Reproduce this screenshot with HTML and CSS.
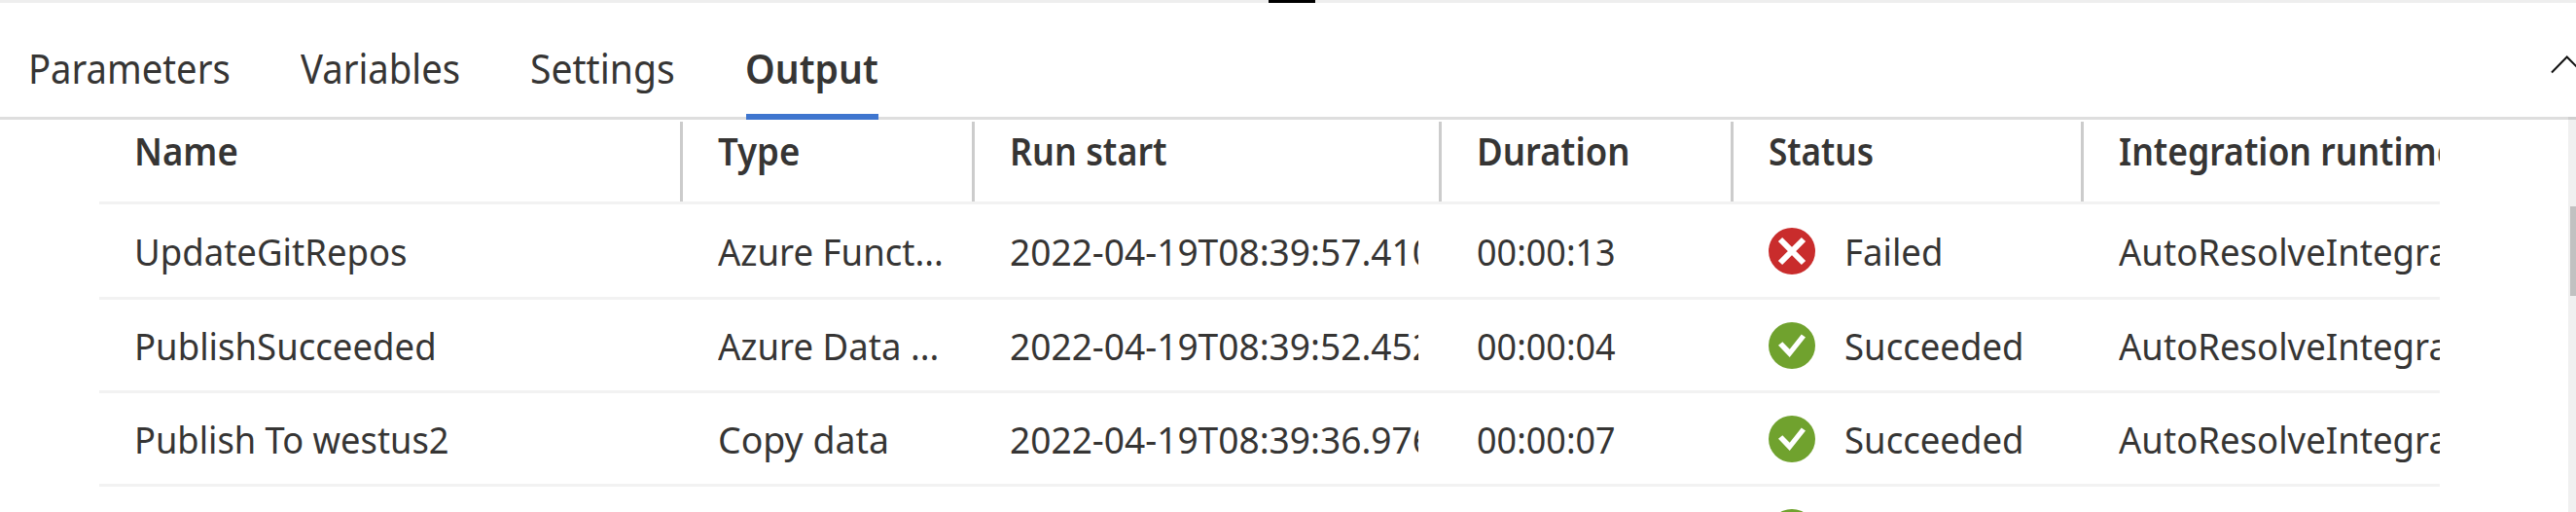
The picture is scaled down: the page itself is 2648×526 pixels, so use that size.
FILE: index.html
```html
<!DOCTYPE html>
<html lang="en">
<head>
<meta charset="utf-8">
<title>Pipeline output</title>
<link rel="stylesheet" href="styles.css">
</head>
<body>
<svg class="defs" width="0" height="0">
  <symbol id="failed" viewBox="0 0 48 48"><circle cx="24" cy="24" r="24" fill="#c92c2c"/><path d="M12 12L36 36M36 12L12 36" stroke="#fff" stroke-width="6"/></symbol>
  <symbol id="ok" viewBox="0 0 48 48"><circle cx="24" cy="24" r="24" fill="#70a22e"/><path d="M10 23.8L14.3 20.3L21.7 27.8L33.8 12.5L38 15.5L21.7 36Z" fill="#fff"/></symbol>
</svg>
<div class="panel">
  <div class="resize-bar"><div class="grip"></div></div>
  <div class="tabs">
    <div class="tab tab-parameters"><span class="t">Parameters</span></div>
    <div class="tab tab-variables"><span class="t">Variables</span></div>
    <div class="tab tab-settings"><span class="t">Settings</span></div>
    <div class="tab tab-output active"><span class="t">Output</span></div>
    <svg class="chevron" width="26" height="22" viewBox="0 0 26 22"><path d="M1 18.5L16.7 2.5L32.7 18.5" fill="none" stroke="#111" stroke-width="2"/></svg>
  </div>
  <div class="content">
    <div class="grid">
      <div class="row head">
        <div class="cell"><span class="t">Name</span></div>
        <div class="cell"><span class="t">Type</span></div>
        <div class="cell"><span class="t t-run">Run start</span></div>
        <div class="cell"><span class="t">Duration</span></div>
        <div class="cell"><span class="t t-status">Status</span></div>
        <div class="cell"><span class="t t-runtime">Integration runtime</span></div>
      </div>
      <div class="row first">
        <div class="cell"><span class="t">UpdateGitRepos</span></div>
        <div class="cell"><span class="t">Azure Funct...</span></div>
        <div class="cell"><span class="t t-time">2022-04-19T08:39:57.410</span></div>
        <div class="cell"><span class="t t-duration">00:00:13</span></div>
        <div class="cell status"><svg class="icon"><use href="#failed"/></svg><span class="t">Failed</span></div>
        <div class="cell"><span class="t">AutoResolveIntegrationRuntime</span></div>
      </div>
      <div class="row">
        <div class="cell"><span class="t">PublishSucceeded</span></div>
        <div class="cell"><span class="t">Azure Data ...</span></div>
        <div class="cell"><span class="t t-time">2022-04-19T08:39:52.452</span></div>
        <div class="cell"><span class="t t-duration">00:00:04</span></div>
        <div class="cell status"><svg class="icon"><use href="#ok"/></svg><span class="t">Succeeded</span></div>
        <div class="cell"><span class="t">AutoResolveIntegrationRuntime</span></div>
      </div>
      <div class="row">
        <div class="cell"><span class="t t-westus">Publish To westus2</span></div>
        <div class="cell"><span class="t t-copy">Copy data</span></div>
        <div class="cell"><span class="t t-time">2022-04-19T08:39:36.976</span></div>
        <div class="cell"><span class="t t-duration">00:00:07</span></div>
        <div class="cell status"><svg class="icon"><use href="#ok"/></svg><span class="t">Succeeded</span></div>
        <div class="cell"><span class="t">AutoResolveIntegrationRuntime</span></div>
      </div>
      <div class="row">
        <div class="cell"></div>
        <div class="cell"></div>
        <div class="cell"></div>
        <div class="cell"></div>
        <div class="cell status"><svg class="icon"><use href="#ok"/></svg></div>
        <div class="cell"></div>
      </div>
    </div>
    <div class="scrollbar"><div class="thumb"></div></div>
  </div>
</div>
</body>
</html>
```
FILE: styles.css
```css
* { box-sizing: border-box; }

body {
  margin: 0;
  background: #fff;
  color: #363534;
  font-family: "Noto Sans", sans-serif;
  font-size: 39px;
  overflow: hidden;
}

.defs { display: block; }

.panel {
  display: flex;
  flex-direction: column;
  width: 2648px;
  height: 526px;
  overflow: hidden;
}

.resize-bar {
  flex: none;
  height: 3px;
  padding-left: 1304px;
  background: #eee;
}

.grip {
  width: 48px;
  height: 3px;
  background: #000;
}

/* Slightly condensed text */
.t {
  --k: 0.937;
  display: inline-block;
  flex: none;
  white-space: nowrap;
  transform: scaleX(var(--k));
  transform-origin: left center;
}

.tabs {
  flex: none;
  display: flex;
  height: 120px;
  padding-left: 29px;
  border-bottom: 3px solid #dedede;
  font-size: 42px;
  line-height: 58px;
}

.tab {
  flex: none;
  height: 120px;
  padding-top: 38px;
}

.tab-parameters { width: 280px; }
.tab-variables { width: 236px; }
.tab-settings { width: 222px; }
.tab-output { width: 136px; }
.tab-parameters .t { --k: 0.91; }
.tab-variables .t { --k: 0.911; }
.tab-settings .t { --k: 0.93; }
.tab-output .t { --k: 0.93; margin-left: -1px; }

.tab.active {
  border-bottom: 6px solid #3f76cf;
  font-weight: 600;
}

.chevron {
  margin: 53px 0 0 auto;
}

.content {
  flex: 1;
  display: flex;
  justify-content: space-between;
  min-height: 0;
}

.grid {
  width: 2406px;
  margin-left: 102px;
}

.row {
  display: grid;
  grid-template-columns: 600px 300px 480px 300px 360px 366px;
  height: 96px;
  border-bottom: 3px solid #f2f2f2;
}

.row.first { height: 98px; }

.cell {
  display: flex;
  align-items: center;
  min-width: 0;
  margin-right: 24px;
  padding-left: 36px;
  line-height: 53px;
  overflow: hidden;
}

.cell:last-child { margin-right: 0; }

.head {
  height: 87px;
  padding-top: 2px;
  font-weight: 600;
}

.head .cell {
  align-items: flex-start;
  margin-right: 0;
  padding-top: 3px;
  border-right: 3px solid #ccc;
}

.head .cell:last-child { border-right: 0; }

.status .icon {
  flex: none;
  width: 48px;
  height: 48px;
  margin-right: 30px;
}

.t-run { --k: 0.92; }
.t-status { --k: 0.9; }
.t-runtime { --k: 0.912; }
.t-time { --k: 0.951; }
.t-duration { --k: 0.922; }
.t-westus { --k: 0.93; }
.t-copy { --k: 0.96; }

.scrollbar {
  width: 8px;
  margin-top: -3px;
  padding: 92px 0 0 2px;
  background: rgba(0, 0, 0, 0.06);
}

.thumb {
  height: 92px;
  background: #c1c1c1;
}
```
